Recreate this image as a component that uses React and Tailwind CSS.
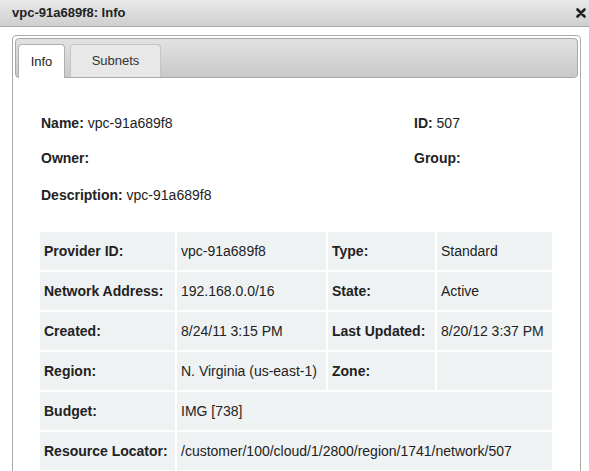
import React from "react";

const rows = [
  ["Provider ID:", "vpc-91a689f8", "Type:", "Standard"],
  ["Network Address:", "192.168.0.0/16", "State:", "Active"],
  ["Created:", "8/24/11 3:15 PM", "Last Updated:", "8/20/12 3:37 PM"],
  ["Region:", "N. Virginia (us-east-1)", "Zone:", ""],
  ["Budget:", "IMG [738]"],
  ["Resource Locator:", "/customer/100/cloud/1/2800/region/1741/network/507"],
];

function Cell({ bold, span, children }) {
  return (
    <div
      className={`h-[38px] bg-[#eff2f3] flex items-center px-[4px] whitespace-nowrap ${bold ? "font-bold" : ""} ${span ? "col-span-3" : ""}`}
    >
      {children}
    </div>
  );
}

export default function App() {
  return (
    <div className="w-[589px] h-[471px] overflow-hidden bg-white text-[14px] text-[#222] font-['Liberation_Sans',Arial,sans-serif]">
      <div className="h-[27px] flex items-center justify-between pl-[12px] pr-[3px] bg-gradient-to-b from-[#e9e9e9] to-[#cfcfcf] border-b border-[#a9a9a9] text-[13px]">
        <div className="font-bold">vpc-91a689f8: Info</div>
        <svg width="10" height="10" viewBox="0 0 10 10">
          <path d="M1.5 1.5 L8.5 8.5 M8.5 1.5 L1.5 8.5" stroke="#222" strokeWidth="2.6" strokeLinecap="round" />
        </svg>
      </div>

      <div className="mt-[8px] ml-[12px] w-[569px] h-[480px] border border-[#aaa] rounded-[4px] p-[2px]">
        <div className="h-[40px] rounded-[4px] border border-[#a8a8a8] bg-gradient-to-b from-[#e2e2e2] to-[#c9c9c9] flex items-end pl-[2px] gap-[5px] text-[13px]">
          <div className="w-[47px] h-[34px] -mb-[1px] bg-white border border-b-0 border-[#b0b0b0] rounded-t-[4px] flex items-center justify-center">
            Info
          </div>
          <div className="w-[91px] h-[33px] bg-[#e8e8e8] border border-b-0 border-[#c4c4c4] rounded-t-[4px] flex items-center justify-center text-[#333]">
            Subnets
          </div>
        </div>

        <div className="pl-[26px] pt-[37px]">
          <div className="grid grid-cols-[373px_1fr] gap-y-[18px] leading-[17px]">
            <div><span className="font-bold">Name:</span> vpc-91a689f8</div>
            <div><span className="font-bold">ID:</span> 507</div>
            <div className="font-bold">Owner:</div>
            <div className="font-bold">Group:</div>
            <div className="col-span-2 mt-[2px]"><span className="font-bold">Description:</span> vpc-91a689f8</div>
          </div>

          <div className="mt-[28px] -ml-[1px] grid grid-cols-[135px_149px_107px_115px] gap-[2px]">
            {rows.map((r, i) =>
              r.length === 4 ? (
                <React.Fragment key={i}>
                  <Cell bold>{r[0]}</Cell>
                  <Cell>{r[1]}</Cell>
                  <Cell bold>{r[2]}</Cell>
                  <Cell>{r[3]}</Cell>
                </React.Fragment>
              ) : (
                <React.Fragment key={i}>
                  <Cell bold>{r[0]}</Cell>
                  <Cell span>{r[1]}</Cell>
                </React.Fragment>
              )
            )}
          </div>
        </div>
      </div>
    </div>
  );
}
